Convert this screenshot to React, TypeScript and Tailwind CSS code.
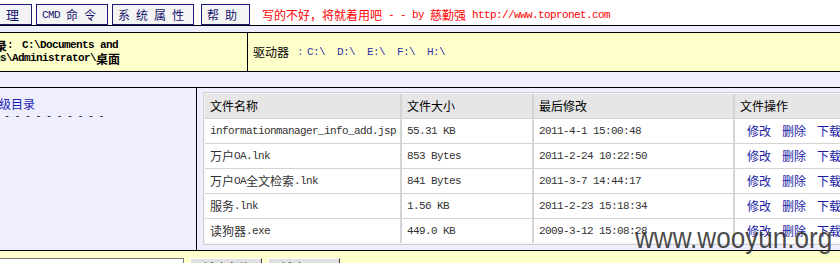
import React from "react";

const LAT = "font-['Liberation_Mono',monospace] text-[11px] tracking-[-0.6px]";
const CJK = "font-['Noto_Sans_CJK_SC',sans-serif] text-[12px] tracking-normal";

function Mixed({ text, bold = false }: { text: string; bold?: boolean }) {
  const parts = text.split(/([\u3000-\u9fff\uff00-\uffef]+)/);
  return (
    <>
      {parts.map((p, i) =>
        p ? (
          <span key={i} className={(i % 2 ? CJK : LAT) + (bold ? " font-bold" : "")}>
            {p}
          </span>
        ) : null
      )}
    </>
  );
}

const rows = [
  ["informationmanager_info_add.jsp", "55.31 KB", "2011-4-1 15:00:48"],
  ["万户OA.lnk", "853 Bytes", "2011-2-24 10:22:50"],
  ["万户OA全文检索.lnk", "841 Bytes", "2011-3-7 14:44:17"],
  ["服务.lnk", "1.56 KB", "2011-2-23 15:18:34"],
  ["读狗器.exe", "449.0 KB", "2009-3-12 15:08:28"],
];

const btn =
  "h-[21px] border border-[#1b1b7b] bg-[#f4f4f4] flex items-center text-[#14146e] whitespace-pre shrink-0";

export default function App() {
  return (
    <div className="relative w-[840px] h-[263px] overflow-hidden bg-white flex flex-col leading-[14px]">
      {/* top menu bar */}
      <div className="h-[25px] pt-[4px] flex items-start whitespace-nowrap bg-white">
        <div className={btn + " ml-[-20px] w-[52px] justify-end pr-[12px]"}>
          <span className="font-['Noto_Sans_CJK_SC',sans-serif] text-[13px]">理</span>
        </div>
        <div className={btn + " ml-[4px] w-[72px] pl-[5px]"}>
          <Mixed text="CMD 命 令" />
        </div>
        <div className={btn + " ml-[4px] w-[82px] pl-[5px]"}>
          <Mixed text="系 统 属 性" />
        </div>
        <div className={btn + " ml-[7px] w-[49px] pl-[5px]"}>
          <Mixed text="帮 助" />
        </div>
        <div className="ml-[12px] h-[21px] flex items-center text-[#ff0000] whitespace-pre">
          <Mixed text="写的不好，将就着用吧 - - by 慈勤强 http://www.topronet.com" />
        </div>
      </div>
      <div className="h-px bg-black shrink-0" />
      <div className="h-[6px] bg-[#eeeeff] shrink-0" />
      <div className="h-px bg-black shrink-0" />

      {/* path / drives row */}
      <div className="h-[38px] flex bg-[#ffffcc] shrink-0">
        <div className="w-[248px] border-r border-black overflow-hidden flex flex-col justify-center whitespace-pre leading-[13px] text-black">
          <div className="ml-[-41px] flex items-center">
            <Mixed text="当前目录:" bold />
            <span className="ml-[9px] flex">
              <Mixed text="C:\Documents and" bold />
            </span>
          </div>
          <div className="ml-[-42px] flex items-center">
            <Mixed text="Settings\Administrator\桌面" bold />
          </div>
        </div>
        <div className="flex-1 flex items-center pl-[5px] whitespace-pre">
          <span className={CJK + " text-black"}>驱动器</span>
          <span className={LAT + " ml-[8px] text-[#5a5aa8]"}>:</span>
          <span className={LAT + " ml-[4px] text-[#2f2fa8]"}>C:\</span>
          <span className={LAT + " ml-[12px] text-[#2f2fa8]"}>D:\</span>
          <span className={LAT + " ml-[12px] text-[#2f2fa8]"}>E:\</span>
          <span className={LAT + " ml-[12px] text-[#2f2fa8]"}>F:\</span>
          <span className={LAT + " ml-[12px] text-[#2f2fa8]"}>H:\</span>
        </div>
      </div>
      <div className="h-px bg-black shrink-0" />
      <div className="h-[15px] bg-[#eeeeff] shrink-0" />
      <div className="h-px bg-black shrink-0" />

      {/* main area */}
      <div className="h-[162px] flex bg-[#eeeeff] shrink-0">
        <div className="w-[197px] border-r border-black overflow-hidden pt-[8px] whitespace-pre shrink-0">
          <div className={CJK + " ml-[-13px] text-[#1d1db0] leading-[15px]"}>上级目录</div>
          <div className="ml-[4px] mt-[-1px] font-['Liberation_Mono',monospace] text-[10px] tracking-[-0.75px] text-[#222] leading-[14px]">
            - - - - - - - - - -
          </div>
        </div>
        <div className="flex-1 pl-[6px] pt-[4px] overflow-hidden">
          <div className="w-[700px] border border-[#cfcfcf] bg-[#f4f4f4] p-px">
            <div className="grid grid-cols-[195px_130px_199px_130px] auto-rows-[24px] gap-x-[2px] gap-y-px bg-[#d4d4d4]">
              {["文件名称", "文件大小", "最后修改", "文件操作"].map((h) => (
                <div key={h} className={CJK + " bg-[#e6e6e6] pl-[5px] flex items-center text-black"}>
                  {h}
                </div>
              ))}
              {rows.map((r, i) => (
                <React.Fragment key={i}>
                  {r.map((c, j) => (
                    <div key={j} className="bg-white pl-[5px] flex items-center text-[#333] whitespace-pre">
                      <Mixed text={c} />
                    </div>
                  ))}
                  <div className="bg-white pl-[12px] flex items-center gap-[11px] text-[#1a1aa5]">
                    <span className={CJK}>修改</span>
                    <span className={CJK}>删除</span>
                    <span className={CJK}>下载</span>
                  </div>
                </React.Fragment>
              ))}
            </div>
          </div>
        </div>
      </div>
      <div className="h-px bg-black shrink-0" />

      {/* bottom bar */}
      <div className="flex-1 bg-[#ffffcc] pt-[7px] flex items-start">
        <div className="ml-[-20px] w-[204px] h-[20px] border border-[#7a7a7a] bg-white shrink-0" />
        <div className="ml-[6px] w-[72px] h-[20px] bg-[#e0e0e0] border border-t-white border-l-white border-r-[#404040] border-b-[#404040] flex items-start pt-[2px] justify-center shrink-0">
          <span className={CJK + " text-black"}>新建文件</span>
        </div>
        <div className="ml-[6px] w-[72px] h-[20px] bg-[#e0e0e0] border border-t-white border-l-white border-r-[#404040] border-b-[#404040] flex items-start pt-[2px] justify-center shrink-0">
          <span className={CJK + " text-black"}>新建目录</span>
        </div>
      </div>

      {/* watermark */}
      <div className="absolute left-[635px] top-[224px] font-['Liberation_Sans',sans-serif] text-[29px] leading-none text-[#333333]/90 scale-x-[0.9] origin-left whitespace-nowrap pointer-events-none">
        www.wooyun.org
      </div>
    </div>
  );
}
